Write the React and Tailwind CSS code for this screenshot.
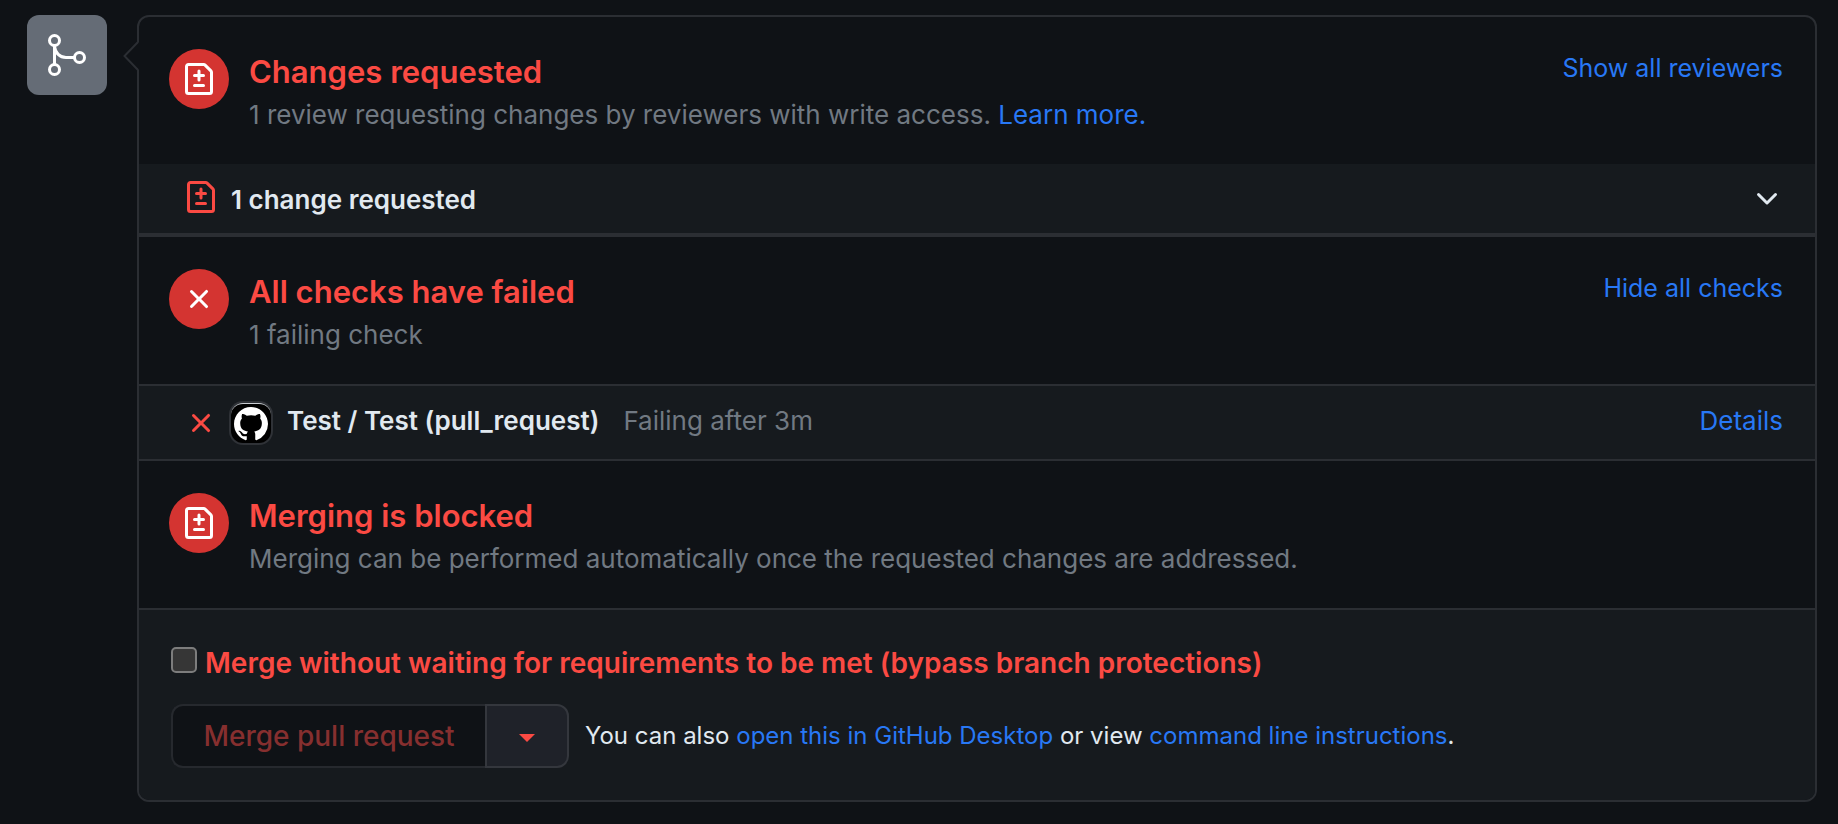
const FILE_DIFF =
  'M2.75 1.5a.25.25 0 00-.25.25v12.5c0 .138.112.25.25.25h10.5a.25.25 0 00.25-.25V4.664a.25.25 0 00-.073-.177l-2.914-2.914a.25.25 0 00-.177-.073H2.75zM1 1.75C1 .784 1.784 0 2.75 0h7.586c.464 0 .909.184 1.237.513l2.914 2.914c.329.328.513.773.513 1.237v9.586A1.75 1.75 0 0113.25 16H2.75A1.75 1.75 0 011 14.25V1.75zm7 1.5a.75.75 0 01.75.75v1.5h1.5a.75.75 0 010 1.5h-1.5v1.5a.75.75 0 01-1.5 0V7h-1.5a.75.75 0 010-1.5h1.5V4A.75.75 0 018 3.25zm-3 8a.75.75 0 01.75-.75h4.5a.75.75 0 010 1.5h-4.5a.75.75 0 01-.75-.75z';
const CROSS =
  'M3.72 3.72a.75.75 0 011.06 0L8 6.94l3.22-3.22a.75.75 0 111.06 1.06L9.06 8l3.22 3.22a.75.75 0 11-1.06 1.06L8 9.06l-3.22 3.22a.75.75 0 01-1.06-1.06L6.94 8 3.72 4.78a.75.75 0 010-1.06z';
const CHEVRON_DOWN =
  'M12.78 6.22a.75.75 0 010 1.06l-4.25 4.25a.75.75 0 01-1.06 0L3.22 7.28a.75.75 0 011.06-1.06L8 9.94l3.72-3.72a.75.75 0 011.06 0z';
const MARK_GITHUB =
  'M8 0C3.58 0 0 3.58 0 8c0 3.54 2.29 6.53 5.47 7.59.4.07.55-.17.55-.38 0-.19-.01-.82-.01-1.49-2.01.37-2.53-.49-2.69-.94-.09-.23-.48-.94-.82-1.13-.28-.15-.68-.52-.01-.53.63-.01 1.08.58 1.23.82.72 1.21 1.87.87 2.33.66.07-.52.28-.87.51-1.07-1.78-.2-3.64-.89-3.64-3.95 0-.87.31-1.59.82-2.15-.08-.2-.36-1.02.08-2.12 0 0 .67-.21 2.2.82.64-.18 1.32-.27 2-.27.68 0 1.36.09 2 .27 1.53-1.04 2.2-.82 2.2-.82.44 1.1.16 1.92.08 2.12.51.56.82 1.27.82 2.15 0 3.07-1.87 3.75-3.65 3.95.29.25.54.73.54 1.48 0 1.07-.01 1.93-.01 2.2 0 .21.15.46.55.38A8.013 8.013 0 0016 8c0-4.42-3.58-8-8-8z';

function Icon({ path, className = 'size-8' }) {
  return (
    <svg viewBox="0 0 16 16" fill="currentColor" aria-hidden="true" className={`shrink-0 ${className}`}>
      <path fillRule="evenodd" d={path} />
    </svg>
  );
}

function GitMergeIcon() {
  return (
    <svg viewBox="0 0 24 24" fill="none" stroke="currentColor" strokeWidth="1.5" aria-hidden="true" className="size-12">
      <circle cx="5.75" cy="4.75" r="2.5" />
      <circle cx="5.75" cy="19.25" r="2.5" />
      <circle cx="18.25" cy="13.25" r="2.5" />
      <path d="M5.75 7.25v9.5M5.75 7.75c.4 3.2 2.6 5.5 5.75 5.5h4.25" />
    </svg>
  );
}

function TextLink({ children }) {
  return (
    <a href="#" className="text-[#2878f5] hover:underline">
      {children}
    </a>
  );
}

function StatusSection({ icon, title, description, action }) {
  return (
    <section className="flex items-start gap-5 px-[30px] pt-8 pb-[29px]">
      <span className="flex size-[60px] shrink-0 items-center justify-center rounded-full bg-[#d43431] text-white">
        <Icon path={icon} />
      </span>
      <div className="min-w-0 flex-1">
        <h3 className="text-[31px] leading-[46px] font-semibold text-[#fb4a43]">{title}</h3>
        <p className="text-[26px] leading-10 text-[#717982]">{description}</p>
      </div>
      {action && (
        <div className="shrink-0 pr-[2px] text-[25px] leading-[38px]">
          <TextLink>{action}</TextLink>
        </div>
      )}
    </section>
  );
}

export default function App() {
  return (
    <div className="flex min-h-screen items-start gap-[30px] bg-[#0f1216] pt-[15px] pr-[21px] pb-[22px] pl-[27px] font-[Inter,sans-serif]">
      <div className="flex size-20 shrink-0 items-center justify-center rounded-xl bg-[#656c76] text-white">
        <GitMergeIcon />
      </div>

      <main className="relative min-w-0 flex-1 rounded-xl border-2 border-[#2b2e33]">
        <svg viewBox="0 0 16 30" aria-hidden="true" className="absolute top-[24px] -left-4 h-[30px] w-4">
          <path d="M16 1L2 15l14 14z" fill="#0f1216" />
          <path d="M15 1L1.5 15l13.5 14" fill="none" stroke="#2b2e33" strokeWidth="2" />
        </svg>

        <StatusSection
          icon={FILE_DIFF}
          title="Changes requested"
          description={
            <>
              1 review requesting changes by reviewers with write access. <TextLink>Learn more.</TextLink>
            </>
          }
          action="Show all reviewers"
        />

        <button
          type="button"
          className="flex w-full items-start gap-[14px] border-b-4 border-[#2b2e33] bg-[#161a1e] pt-[17px] pr-8 pb-[14px] pl-[46px] text-left text-[26px] leading-[38px] font-semibold text-[#e1e9f0]"
        >
          <Icon path={FILE_DIFF} className="size-8 text-[#fb4a43]" />
          <span className="flex-1">1 change requested</span>
          <Icon path={CHEVRON_DOWN} />
        </button>

        <StatusSection
          icon={CROSS}
          title="All checks have failed"
          description="1 failing check"
          action="Hide all checks"
        />

        <div className="flex items-start border-y-2 border-[#2b2e33] bg-[#161a1e] pt-4 pr-8 pb-[15px] pl-[46px] text-[26px] leading-[38px]">
          <div className="mr-4 flex h-[42px] shrink-0 items-center gap-[14px]">
            <Icon path={CROSS} className="size-8 text-[#fb4a43]" />
            <span className="flex size-10 items-center justify-center rounded-xl border-t border-[#c9cdd2] bg-black text-white ring-2 ring-[#2f3237]">
              <Icon path={MARK_GITHUB} className="size-[34px]" />
            </span>
          </div>
          <span className="font-semibold text-[#e1e9f0]">Test / Test (pull_request)</span>
          <span className="ml-6 flex-1 text-[#717982]">Failing after 3m</span>
          <TextLink>Details</TextLink>
        </div>

        <StatusSection
          icon={FILE_DIFF}
          title="Merging is blocked"
          description="Merging can be performed automatically once the requested changes are addressed."
        />

        <footer className="rounded-b-[10px] border-t-2 border-[#2b2e33] bg-[#161a1e] px-8 pt-8 pb-8">
          <div className="flex items-start gap-2">
            <input
              id="bypass"
              type="checkbox"
              className="mt-[5px] size-[26px] shrink-0 appearance-none rounded-[5px] border-2 border-[#7d7d7d] bg-[#363636] checked:bg-[#2878f5]"
            />
            <label htmlFor="bypass" className="text-[28px] leading-[42px] font-semibold text-[#fb4a43]">
              Merge without waiting for requirements to be met (bypass branch protections)
            </label>
          </div>
          <div className="mt-5 flex items-center gap-4">
            <div className="flex h-16 shrink-0">
              <button
                type="button"
                disabled
                className="w-[314px] rounded-l-xl border-2 border-r-0 border-[#26292e] bg-[#0f1216] text-[28px] leading-10 font-medium text-[#862f2f]"
              >
                Merge pull request
              </button>
              <button
                type="button"
                aria-label="Select merge method"
                className="flex w-[84px] items-center justify-center rounded-r-xl border-2 border-[#34373d] bg-[#1f2229] pt-1 text-[#fb4a43]"
              >
                <svg viewBox="0 0 16 8" fill="currentColor" aria-hidden="true" className="h-2 w-4">
                  <path d="M0 0h16L8 8z" />
                </svg>
              </button>
            </div>
            <p className="text-2xl leading-9 text-[#e1e9f0]">
              You can also <TextLink>open this in GitHub Desktop</TextLink> or view{' '}
              <TextLink>command line instructions</TextLink>.
            </p>
          </div>
        </footer>
      </main>
    </div>
  );
}
